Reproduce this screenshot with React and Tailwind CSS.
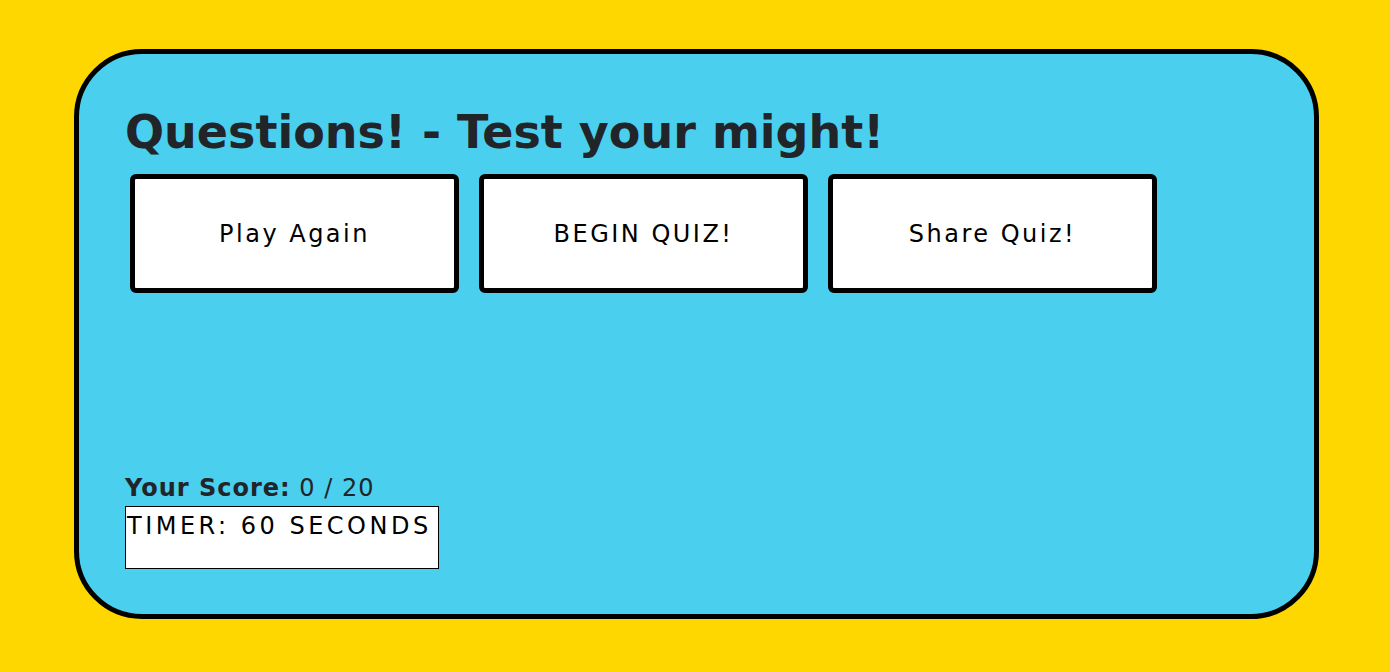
export default function App() {
  const buttons = ["Play Again", "BEGIN QUIZ!", "Share Quiz!"];
  return (
    <div className="min-h-[672px] w-full bg-[#ffd700] pt-[49px] pl-[74px] pr-[71px] pb-[53px] font-['DejaVu_Sans',sans-serif]">
      <div className="h-[570px] rounded-[68px] border-[5px] border-black bg-[#4acfee] pl-[46px] pt-[48px]">
        <h1 className="text-[46px] font-bold leading-[60px] text-[#212529]">
          Questions! - Test your might!
        </h1>
        <div className="mt-[12px] flex gap-[20px] pl-[5px]">
          {buttons.map((b) => (
            <button
              key={b}
              className="flex h-[119px] w-[329px] items-center justify-center rounded-[6px] border-[5px] border-black bg-white text-[24px] text-black tracking-[2.5px]"
            >
              {b}
            </button>
          ))}
        </div>
        <div className="mt-[181px] text-[24px] leading-[28px] tracking-[1px] text-[#212529]">
          <span className="font-bold">Your Score:</span> 0 / 20
        </div>
        <div className="mt-[4px] h-[63px] w-[314px] border border-black bg-white pl-[1px] pt-[5px] text-[24px] leading-[28px] tracking-[3.5px] text-black">
          TIMER: 60 SECONDS
        </div>
      </div>
    </div>
  );
}
